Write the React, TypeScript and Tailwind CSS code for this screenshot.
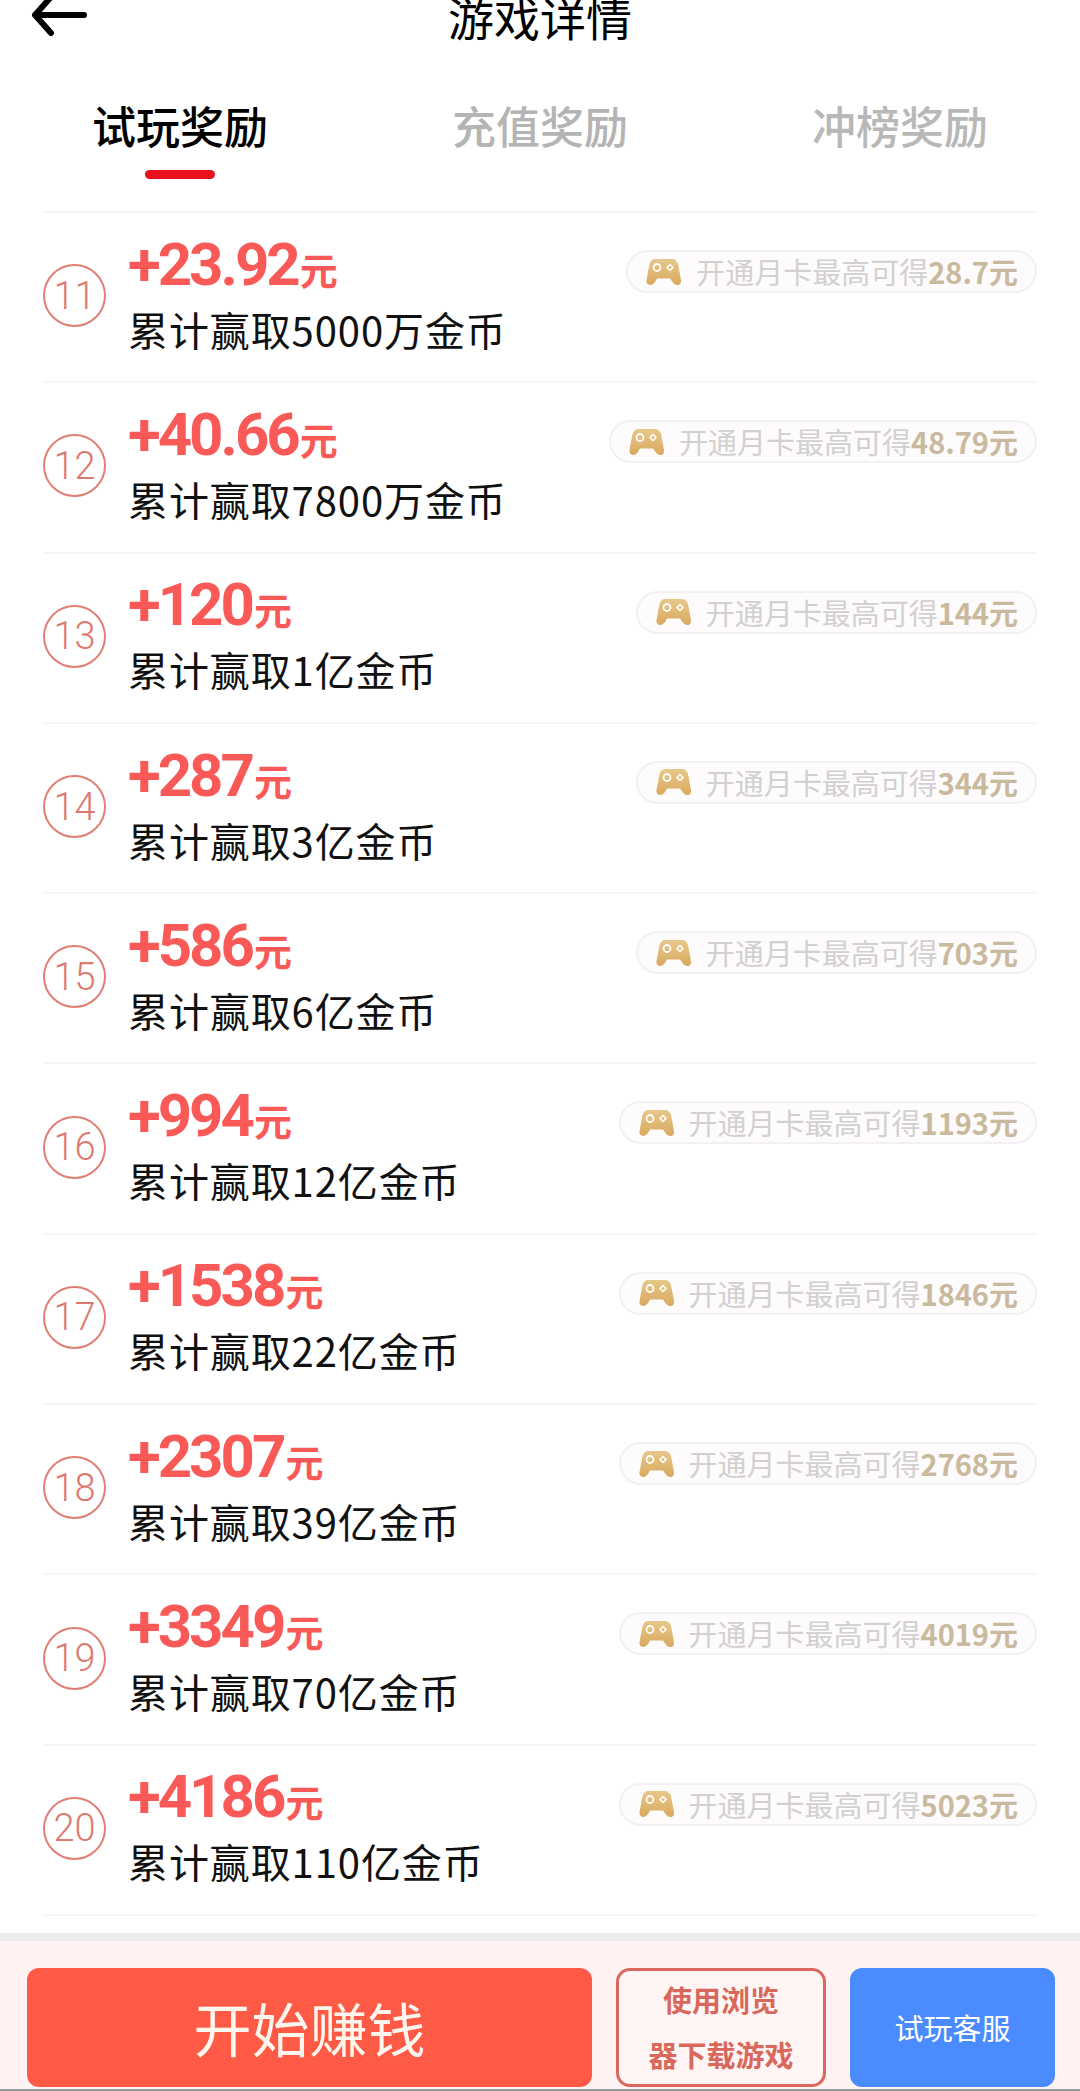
const font = { fontFamily: '"Noto Sans CJK SC", Roboto, sans-serif' };

const rewards = [
  { no: 11, amount: '+23.92', goal: '5000万', vip: '28.7' },
  { no: 12, amount: '+40.66', goal: '7800万', vip: '48.79' },
  { no: 13, amount: '+120', goal: '1亿', vip: '144' },
  { no: 14, amount: '+287', goal: '3亿', vip: '344' },
  { no: 15, amount: '+586', goal: '6亿', vip: '703' },
  { no: 16, amount: '+994', goal: '12亿', vip: '1193' },
  { no: 17, amount: '+1538', goal: '22亿', vip: '1846' },
  { no: 18, amount: '+2307', goal: '39亿', vip: '2768' },
  { no: 19, amount: '+3349', goal: '70亿', vip: '4019' },
  { no: 20, amount: '+4186', goal: '110亿', vip: '5023' },
];

function GamepadIcon({ id }: { id: number }) {
  return (
    <svg width="35" height="28" viewBox="0 0 35 28" className="shrink-0">
      <defs>
        <linearGradient id={`pad-${id}`} x1="0" y1="0" x2="0" y2="1">
          <stop offset="0" stopColor="#e6c88a" />
          <stop offset="1" stopColor="#d9a95f" />
        </linearGradient>
      </defs>
      <path
        d="M9 1h17c3 0 5 2 6 5l3 16c.4 3-1 5-3.500 5-2 0-3.500-1-5-3l-2.500-3.500h-13L9 24c-1.500 2-3 3-5 3-2.500 0-4-2-3.500-5l3-16c1-3 3-5 5.500-5z"
        fill={`url(#pad-${id})`}
      />
      <circle cx="11" cy="9.500" r="3.500" fill="none" stroke="#fff" strokeWidth="1.800" />
      <path d="M24 6.500l3 3-3 3-3-3z" fill="none" stroke="#fff" strokeWidth="1.500" />
    </svg>
  );
}

export default function App() {
  return (
    <div className="h-[2091px] w-[1080px] overflow-hidden bg-white flex flex-col" style={font}>
      {/* Header, cut off by the top of the screen */}
      <div className="h-[32px] shrink-0 flex items-center">
        <div className="flex-1">
          <svg width="56" height="42" viewBox="0 0 56 42" className="ml-[31px]">
            <path d="M20 2L4 20l16 18M4 20h49" fill="none" stroke="#000" strokeWidth="6" strokeLinecap="round" strokeLinejoin="round" />
          </svg>
        </div>
        <div className="text-[46px] leading-[60px] text-black">游戏详情</div>
        <div className="flex-1" />
      </div>

      {/* Tabs */}
      <div className="grid grid-cols-3 h-[179px] pt-[65px]">
        <div className="flex flex-col items-center">
          <div className="text-[44px] leading-[56px] font-medium text-black">试玩奖励</div>
          <div className="mt-[17px] h-[9px] w-[70px] rounded-full bg-[#e8101c]" />
        </div>
        <div className="text-center text-[44px] leading-[56px] font-medium text-[#b4b4b4]">充值奖励</div>
        <div className="text-center text-[44px] leading-[56px] font-medium text-[#b8b8b8]">冲榜奖励</div>
      </div>

      {/* Reward rows */}
      <div className="mx-[43px] border-b-2 border-[#f6f6f6]">
        {rewards.map((r) => (
          <div key={r.no} className="h-[170.3px] border-t-2 border-[#f6f6f6] flex items-center">
            <div className="mb-[3px] w-[63px] h-[63px] shrink-0 rounded-full border-[2.5px] border-[#e08075] flex items-center justify-center text-[38px] leading-none text-[#dc7a70]" style={{ fontFamily: 'Roboto, sans-serif', fontWeight: 300 }}>
              {r.no}
            </div>
            <div className="ml-[22px] mb-[5px] flex flex-col">
              <div className="flex items-baseline h-[62px] font-bold text-[#f95a58]">
                <span className="text-[60px] leading-[62px] tracking-[-3px]" style={{ fontFamily: 'Roboto, sans-serif' }}>{r.amount}</span>
                <span className="ml-[2px] text-[38px] leading-[62px]">元</span>
              </div>
              <div className="mt-[6px] text-[40px] leading-[54px] tracking-[0.9px] text-[#111]">累计赢取{r.goal}金币</div>
            </div>
            <div className="ml-auto self-start mt-[37px] h-[43px] rounded-full border-2 border-[#f2f0f0] bg-[#fdfbfb] flex items-center pl-[18px] pr-[17px]">
              <GamepadIcon id={r.no} />
              <span className="ml-[15px] text-[29px] leading-none text-[#d2d0d0]">开通月卡最高可得</span>
              <span className="text-[29px] leading-none font-bold text-[#c9b99d]">{r.vip}元</span>
            </div>
          </div>
        ))}
      </div>

      {/* Bottom action bar */}
      <div className="mt-auto h-[158px] border-t-[8px] border-b-2 border-t-[#ececec] border-b-[#999999] bg-[#fff2f2] flex gap-[24px] pl-[27px] pr-[25px] pt-[27px]">
        <div className="w-[565px] h-[119px] rounded-[12px] bg-[#fe5a46] flex items-center justify-center text-[58px] text-[#fff6ee]">开始赚钱</div>
        <div className="w-[210px] h-[119px] rounded-[14px] border-[3px] border-[#d9695f] bg-[#fff5f4] flex flex-col items-center justify-center gap-[23px] pb-[3px] text-[29px] leading-[32px] font-bold text-[#d9685c]">
          <span>使用浏览</span>
          <span>器下载游戏</span>
        </div>
        <div className="w-[205px] h-[119px] rounded-[12px] bg-[#4a8bff] flex items-center justify-center text-[29px] text-white">试玩客服</div>
      </div>
    </div>
  );
}
